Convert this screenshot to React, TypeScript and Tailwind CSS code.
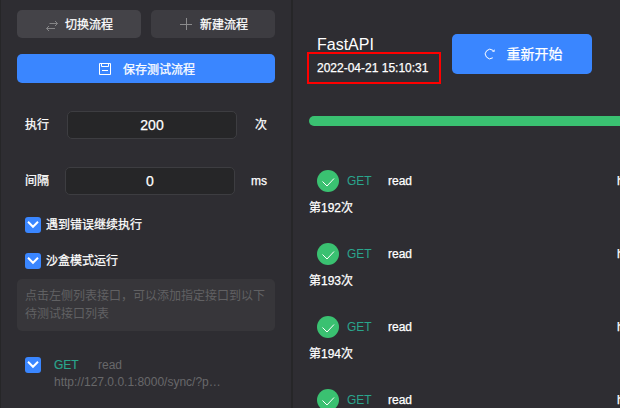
import React from 'react';

function CheckBox() {
  return (
    <span className="flex h-4 w-4 shrink-0 rounded-[3px] bg-[#3a86ff]">
      <svg width="16" height="16" viewBox="0 0 16 16" fill="none" stroke="#fff" strokeWidth="2">
        <path d="M3 4.8l5 5 5-5" />
      </svg>
    </span>
  );
}

function SwapIcon() {
  return (
    <svg width="12" height="12" viewBox="0 0 12 12" fill="none" stroke="#858587" strokeWidth="1">
      <path d="M3.5 3.5h8M9 1l2.5 2.5L9 6M.5 8.5h8.5M3 6L.5 8.5 3 11" />
    </svg>
  );
}

function PlusIcon() {
  return (
    <svg width="12" height="12" viewBox="0 0 12 12" fill="none" stroke="#8b8b8d" strokeWidth="1">
      <path d="M0 6.5h12M6.5 0v12" />
    </svg>
  );
}

function SaveIcon() {
  return (
    <svg width="12" height="12" viewBox="0 0 12 12" fill="none" stroke="#fff" strokeWidth="1">
      <path d="M.5.5h11v11H.5zM2.5.5v3h7v-3M3 7.5h6" />
    </svg>
  );
}

function ReloadIcon() {
  return (
    <svg width="12" height="12" viewBox="0 0 12 12" fill="none" stroke="#fff" strokeWidth="1">
      <path d="M8.8 9.8A4.7 4.7 0 1 1 9 2.4" />
      <path d="M10.6 1.2v2.6H8z" fill="#fff" stroke="none" />
    </svg>
  );
}

interface FieldProps {
  label: string;
  value: string;
  unit: string;
  wide?: boolean;
}

function Field({ label, value, unit, wide }: FieldProps) {
  return (
    <div className="flex h-7 items-center px-2">
      <span className={wide ? 'w-[42px] shrink-0' : 'w-10 shrink-0'}>{label}</span>
      <div className="flex h-7 w-[170px] shrink-0 items-center justify-center rounded-[5px] border border-[#3d3d41] bg-[#262628] text-sm">
        {value}
      </div>
      <span className="ml-auto">{unit}</span>
    </div>
  );
}

function Sidebar() {
  return (
    <aside className="flex w-[293px] shrink-0 flex-col border-l border-r-2 border-l-[#262628] border-r-[#262628] pt-2.5 pr-4 pl-4">
      <div className="flex gap-2.5">
        <button className="flex h-7 w-[124px] items-center justify-center rounded-[5px] bg-[#444348] pl-px">
          <span className="mt-1 mr-[7px]"><SwapIcon /></span>
          <span className="pt-px">切换流程</span>
        </button>
        <button className="flex h-7 w-[124px] items-center justify-center rounded-[5px] bg-[#3d3c41] pl-0.5">
          <span className="mr-2"><PlusIcon /></span>
          <span className="pt-px">新建流程</span>
        </button>
      </div>
      <button className="mt-4 flex h-[29px] w-[258px] items-center justify-center rounded-[5px] bg-[#3a86ff] pt-0.5 pl-0.5">
        <span className="mr-3 -mt-0.5"><SaveIcon /></span>保存测试流程
      </button>
      <div className="mt-7 w-[258px]">
        <Field label="执行" value="200" unit="次" wide />
      </div>
      <div className="mt-7 w-[258px]">
        <Field label="间隔" value="0" unit="ms" />
      </div>
      <label className="mt-[22px] ml-2 flex items-center gap-[5px]"><CheckBox />遇到错误继续执行</label>
      <label className="mt-5 ml-2 flex items-center gap-[5px]"><CheckBox />沙盒模式运行</label>
      <p className="mt-2.5 h-[52px] w-[258px] rounded-[5px] bg-[#37363a] px-2 pt-2 leading-[18px] text-[#616163] [-webkit-text-stroke:0]">
        点击左侧列表接口，可以添加指定接口到以下待测试接口列表
      </p>
      <div className="mt-[26px] ml-2 flex">
        <CheckBox />
        <div className="ml-[13px] leading-4 text-[#68686a] [-webkit-text-stroke:0]">
          <div className="flex">
            <span className="w-11 text-[#2aa58c] [-webkit-text-stroke:0.2px]">GET</span>
            <span>read</span>
          </div>
          <div className="mt-px">http://127.0.0.1:8000/sync/?p…</div>
        </div>
      </div>
    </aside>
  );
}

function ResultRow({ index }: { index: number }) {
  return (
    <div className="h-[73px] shrink-0">
      <div className="flex h-[22px] items-center pl-2">
        <span className="flex h-[22px] w-[22px] shrink-0 rounded-full bg-[#3ac171]">
          <svg width="22" height="22" viewBox="0 0 22 22" fill="none" stroke="#fff" strokeWidth="1">
            <path d="M5.5 11.5l4.5 4.5 7-7.5" />
          </svg>
        </span>
        <span className="ml-2 w-[41px] shrink-0 text-[#2aa58c] [-webkit-text-stroke:0]">GET</span>
        <span className="w-[229px] shrink-0">read</span>
        <span>http</span>
      </div>
      <div className="mt-2 leading-4">第{index}次</div>
    </div>
  );
}

export default function App() {
  return (
    <div className="flex h-[408px] w-[620px] overflow-hidden bg-[#2e2d32] font-['Liberation_Sans','Noto_Sans_CJK_SC',sans-serif] text-xs leading-4 text-white [-webkit-text-stroke:0.25px]">
      <Sidebar />
      <main className="flex min-w-0 flex-1 flex-col overflow-hidden pt-[34px] pl-4">
        <header className="flex h-10">
          <div className="relative w-[143px] pl-2">
            <h1 className="text-base leading-[22px] [-webkit-text-stroke:0]">FastAPI</h1>
            <time className="block pt-1 leading-4">2022-04-21 15:10:31</time>
            <div className="absolute top-[18px] -left-0.5 h-8 w-[134px] border-2 border-[#f00]" />
          </div>
          <button className="flex h-10 w-[140px] items-center justify-center rounded-[5px] bg-[#3a86ff] pl-0.5 text-sm">
            <span className="mr-[11px]"><ReloadIcon /></span>重新开始
          </button>
        </header>
        <div className="mt-[42px] h-2.5 shrink-0 rounded-l-full bg-[#3ac171]" />
        <div className="mt-11 flex w-[420px] flex-col whitespace-nowrap">
          {[192, 193, 194, 195].map((n) => <ResultRow key={n} index={n} />)}
        </div>
      </main>
    </div>
  );
}
